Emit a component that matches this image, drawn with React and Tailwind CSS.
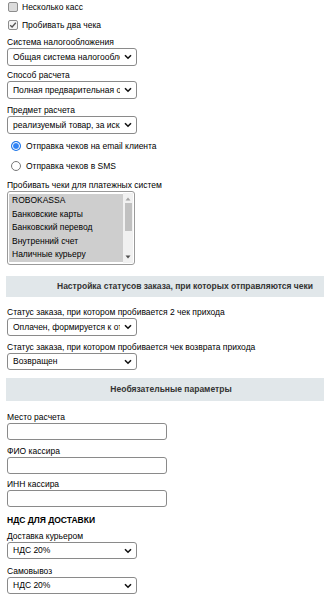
import React from "react";

const Chevron = () => (
  <svg width="8" height="6" viewBox="0 0 8 6" className="shrink-0">
    <path d="M1 1.2 L4 4.2 L7 1.2" fill="none" stroke="#111" strokeWidth="1.6" />
  </svg>
);

const Select = ({ text, w = "w-[130px]", h = "h-[18px]" }) => (
  <div className={`${w} ${h} border border-[#8a8a8a] rounded-[3px] bg-white flex items-center pl-[5px] pr-[4px] text-[8.5px] text-black`}>
    <div className="flex-1 overflow-hidden whitespace-nowrap mr-[4px]">{text}</div>
    <Chevron />
  </div>
);

const Label = ({ children, className = "" }) => (
  <div className={`h-[11px] leading-[11px] text-[8.5px] text-black whitespace-nowrap ${className}`}>{children}</div>
);

const Input = () => (
  <div className="w-[160px] h-[17px] border border-[#8a8a8a] rounded-[3px] bg-white" />
);

const Checkbox = ({ checked, label, className = "" }) => (
  <div className={`h-[14px] flex items-center ${className}`}>
    <div className={`w-[10px] h-[10px] rounded-[2px] border border-[#8d8d8d] flex items-center justify-center ml-[1px] ${checked ? "bg-[#f4f4f4]" : "bg-[#dcdcdc]"}`}>
      {checked && (
        <svg width="8" height="8" viewBox="0 0 8 8">
          <path d="M1.2 4.2 L3.1 6 L6.8 1.8" fill="none" stroke="#555" strokeWidth="1.3" />
        </svg>
      )}
    </div>
    <span className="ml-[4px] text-[8.5px] text-black">{label}</span>
  </div>
);

const Radio = ({ checked, label, className = "" }) => (
  <div className={`h-[14px] flex items-center ${className}`}>
    {checked ? (
      <div className="w-[10px] h-[10px] rounded-full bg-[#1a73e8] flex items-center justify-center ml-[4px]">
        <div className="w-[6px] h-[6px] rounded-full bg-[#2f83f5] border border-white box-content" />
      </div>
    ) : (
      <div className="w-[10px] h-[10px] rounded-full border border-[#777] bg-white ml-[4px]" />
    )}
    <span className="ml-[5px] text-[8.5px] text-black">{label}</span>
  </div>
);

const items = ["ROBOKASSA", "Банковские карты", "Банковский перевод", "Внутренний счет", "Наличные курьеру"];

export default function App() {
  return (
    <div className="w-[329px] h-[600px] bg-white overflow-hidden pl-[7px] text-black" style={{ fontFamily: '"Liberation Sans", Arial, sans-serif' }}>
      <Checkbox label="Несколько касс" className="mt-0" />
      <Checkbox checked label="Пробивать два чека" className="mt-[4px]" />

      <Label className="mt-[5px]">Система налогообложения</Label>
      <Select text="Общая система налогообложения" />

      <Label className="mt-[4px]">Способ расчета</Label>
      <Select text="Полная предварительная оплата" />

      <Label className="mt-[6px]">Предмет расчета</Label>
      <Select text="реализуемый товар, за исключением подакцизного" />

      <Radio checked label="Отправка чеков на email клиента" className="mt-[5px]" />
      <Radio label="Отправка чеков в SMS" className="mt-[6px]" />

      <Label className="mt-[7px]">Пробивать чеки для платежных систем</Label>
      <div className="w-[128px] h-[74px] border border-[#9a9a9a] rounded-[3px] bg-white flex p-[1px]">
        <div className="flex-1 flex flex-col pt-[1px] overflow-hidden">
          {items.map((t) => (
            <div key={t} className="h-[13.6px] leading-[13.6px] bg-[#cecece] text-[8.5px] pl-[3px] whitespace-nowrap">{t}</div>
          ))}
        </div>
        <div className="w-[10px] bg-[#f1f1f1] flex flex-col items-center">
          <svg width="6" height="6" viewBox="0 0 6 6" className="mt-[3px]"><path d="M0.5 4.5 L3 1.5 L5.5 4.5Z" fill="#a3a3a3" /></svg>
          <div className="w-[7px] h-[28px] bg-[#c1c1c1] mt-[1px]" />
          <div className="flex-1" />
          <svg width="6" height="6" viewBox="0 0 6 6" className="mb-[3px]"><path d="M0.5 1.5 L3 4.5 L5.5 1.5Z" fill="#505050" /></svg>
        </div>
      </div>

      <div className="mt-[11px] ml-[-1px] w-[318px] h-[21px] bg-[#e1e7ea] flex items-center pl-[51px]">
        <span className="text-[8.5px] font-bold text-[#333] whitespace-nowrap">Настройка статусов заказа, при которых отправляются чеки</span>
      </div>

      <Label className="mt-[10px]">Статус заказа, при котором пробивается 2 чек прихода</Label>
      <Select text="Оплачен, формируется к отправке" />

      <Label className="mt-[6px]">Статус заказа, при котором пробивается чек возврата прихода</Label>
      <Select text="Возвращен" h="h-[17px]" />

      <div className="mt-[8px] ml-[-1px] w-[318px] h-[23px] bg-[#e1e7ea] flex items-center justify-center pl-[12px]">
        <span className="text-[8.5px] font-bold text-[#333] whitespace-nowrap">Необязательные параметры</span>
      </div>

      <Label className="mt-[11px]">Место расчета</Label>
      <Input />
      <Label className="mt-[6px]">ФИО кассира</Label>
      <Input />
      <Label className="mt-[5px]">ИНН кассира</Label>
      <Input />

      <div className="mt-[7px] h-[13px] leading-[13px] text-[8.5px] font-bold text-black">НДС ДЛЯ ДОСТАВКИ</div>

      <Label className="mt-[4px]">Доставка курьером</Label>
      <Select text="НДС 20%" h="h-[17px]" />
      <Label className="mt-[7px]">Самовывоз</Label>
      <Select text="НДС 20%" h="h-[17px]" />
    </div>
  );
}
